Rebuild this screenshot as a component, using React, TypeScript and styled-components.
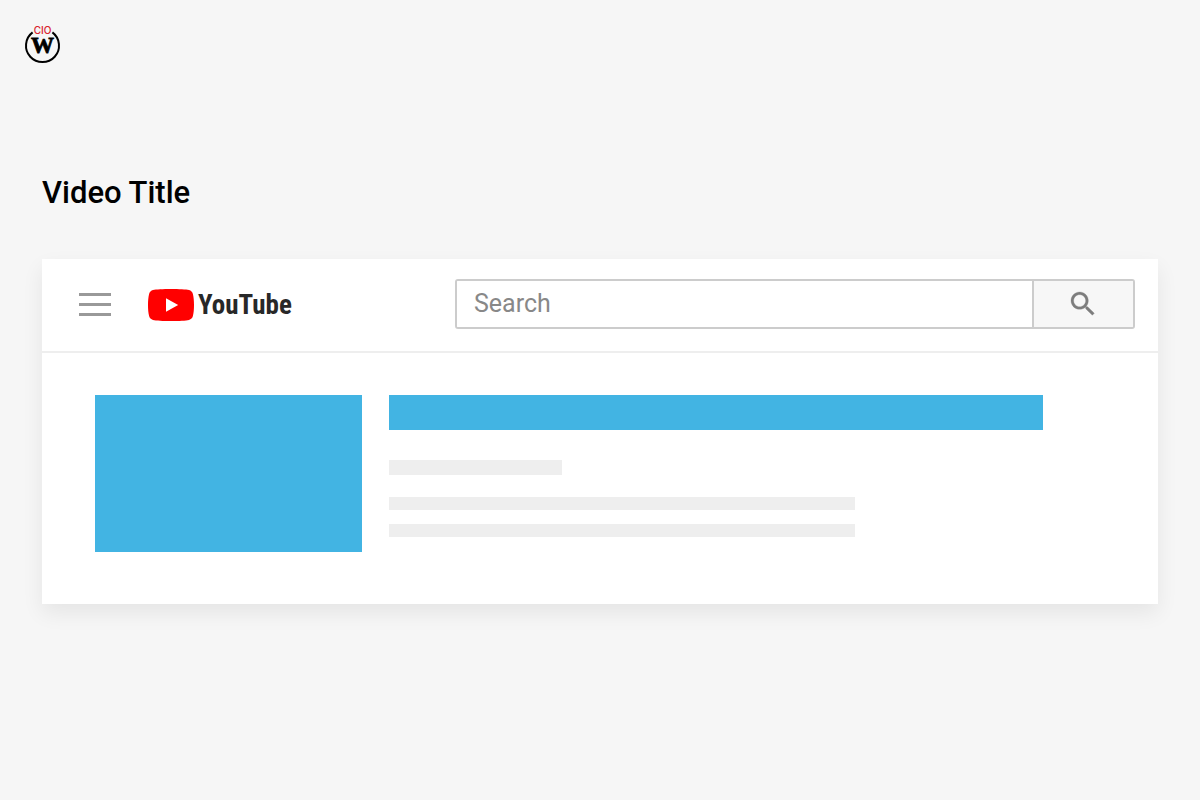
import React from "react";
import styled, { createGlobalStyle } from "styled-components";

const GlobalStyle = createGlobalStyle`
  *, *::before, *::after { box-sizing: border-box; }
  body {
    margin: 0;
    background: #f6f6f6;
    font-family: Roboto, "Liberation Sans", sans-serif;
    color: #000;
  }
`;

const Page = styled.div`
  min-height: 100vh;
  padding: 24px 42px;
`;

const SiteHeader = styled.header`
  display: flex;
  height: 40px;
  margin-left: -18px;
`;

const HomeLink = styled.a`
  display: block;
  width: 38px;
  height: 40px;
`;

const Title = styled.h1`
  margin: 109px 0 46px;
  font-size: 31px;
  line-height: 40px;
  font-weight: 500;
`;

const Card = styled.main`
  background: #fff;
  box-shadow: 0 9px 20px rgba(0, 0, 0, 0.07);
`;

const TopBar = styled.div`
  display: flex;
  align-items: center;
  height: 94px;
  padding: 0 23px 2px 37px;
  border-bottom: 2px solid #eee;
`;

const MenuButton = styled.button`
  display: flex;
  flex-direction: column;
  gap: 7px;
  width: 32px;
  margin: 0 37px 0 0;
  padding: 0;
  border: 0;
  background: none;
`;

const MenuLine = styled.span`
  width: 100%;
  height: 3px;
  background: #999;
`;

const Brand = styled.a`
  display: flex;
  align-items: center;
  gap: 4px;
  flex: none;
  width: 145px;
  padding-top: 2px;
  color: #282828;
  text-decoration: none;

  svg { flex: none; }
`;

const Wordmark = styled.span`
  font-family: "Roboto Condensed", "Liberation Sans Narrow", Roboto, sans-serif;
  font-size: 27px;
  line-height: 36px;
  font-weight: 700;
`;

const SearchForm = styled.form`
  display: flex;
  flex: 1;
  min-width: 0;
  height: 50px;
  margin-left: 162px;
  border: 2px solid #ccc;
  border-radius: 3px;
  overflow: hidden;
`;

const SearchInput = styled.input`
  flex: 1;
  min-width: 0;
  padding: 0 17px 2px;
  border: 0;
  background: #fff;
  color: #333;
  font-family: inherit;
  font-size: 25px;
  &::placeholder { color: #888; opacity: 1; }
`;

const SearchButton = styled.button`
  display: flex;
  align-items: center;
  justify-content: center;
  width: 101px;
  padding: 0 2px 0 0;
  border: 0;
  border-left: 2px solid #ccc;
  background: #f7f7f7;
`;

const Result = styled.article`
  display: flex;
  gap: 27px;
  padding: 42px 115px 52px 53px;
`;

const Thumbnail = styled.div`
  flex: none;
  width: 267px;
  height: 157px;
  background: #42b4e3;
`;

const Details = styled.div`
  flex: 1;
  min-width: 0;
`;

const Headline = styled.div`
  height: 35px;
  margin-bottom: 30px;
  background: #42b4e3;
`;

const Line = styled.div<{ $width: number; $height: number; $gap: number }>`
  width: 100%;
  max-width: ${(p) => p.$width}px;
  height: ${(p) => p.$height}px;
  margin-bottom: ${(p) => p.$gap}px;
  background: #eee;
`;

export default function App() {
  return (
    <>
      <GlobalStyle />
      <Page>
        <SiteHeader>
          <HomeLink href="#" aria-label="CIO W home">
            <svg width="38" height="40" viewBox="0 0 38 40">
              <path d="M8.6 8.4A16.5 16.5 0 1 0 28.4 8.4" fill="none" stroke="#000" strokeWidth="2" />
              <text x="18.5" y="10" textAnchor="middle" fontFamily="Inter, sans-serif" fontWeight="500" fontSize="10" fill="#d8202c">CIO</text>
              <text x="18.5" y="29" textAnchor="middle" fontFamily="Liberation Serif, serif" fontWeight="700" fontSize="23" fill="#000" stroke="#000" strokeWidth="0.8">W</text>
            </svg>
          </HomeLink>
        </SiteHeader>
        <Title>Video Title</Title>
        <Card>
          <TopBar>
            <MenuButton type="button" aria-label="Menu">
              <MenuLine />
              <MenuLine />
              <MenuLine />
            </MenuButton>
            <Brand href="#">
              <svg width="46" height="34" viewBox="0 0 46 34" aria-hidden="true">
                <path d="M23 1C31 1 38 1.3 41 2.1C43 2.6 44.4 4 44.9 6C45.7 9 46 13 46 17S45.7 25 44.9 28C44.4 30 43 31.4 41 31.9C38 32.7 31 33 23 33S8 32.7 5 31.9C3 31.4 1.6 30 1.1 28C.3 25 0 21 0 17S.3 9 1.1 6C1.6 4 3 2.6 5 2.1C8 1.3 15 1 23 1Z" fill="#f00" />
                <path d="M18 10.2L30.2 17L18 23.8Z" fill="#fff" />
              </svg>
              <Wordmark>YouTube</Wordmark>
            </Brand>
            <SearchForm role="search" onSubmit={(e) => e.preventDefault()}>
              <SearchInput type="text" placeholder="Search" aria-label="Search" />
              <SearchButton type="submit" aria-label="Submit search">
                <svg width="32" height="32" viewBox="0 0 24 24" aria-hidden="true">
                  <path fill="#7d7d7d" stroke="#7d7d7d" strokeWidth="0.2" d="M15.5 14h-.79l-.28-.27C15.41 12.59 16 11.11 16 9.5 16 5.91 13.09 3 9.5 3S3 5.91 3 9.5 5.91 16 9.5 16c1.61 0 3.09-.59 4.23-1.57l.27.28v.79l5 4.99L20.49 19l-4.99-5zm-6 0C7.01 14 5 11.99 5 9.5S7.01 5 9.5 5 14 7.01 14 9.5 11.99 14 9.5 14z" />
                </svg>
              </SearchButton>
            </SearchForm>
          </TopBar>
          <Result>
            <Thumbnail />
            <Details>
              <Headline />
              <Line $width={173} $height={15} $gap={22} />
              <Line $width={466} $height={13} $gap={14} />
              <Line $width={466} $height={13} $gap={0} />
            </Details>
          </Result>
        </Card>
      </Page>
    </>
  );
}
